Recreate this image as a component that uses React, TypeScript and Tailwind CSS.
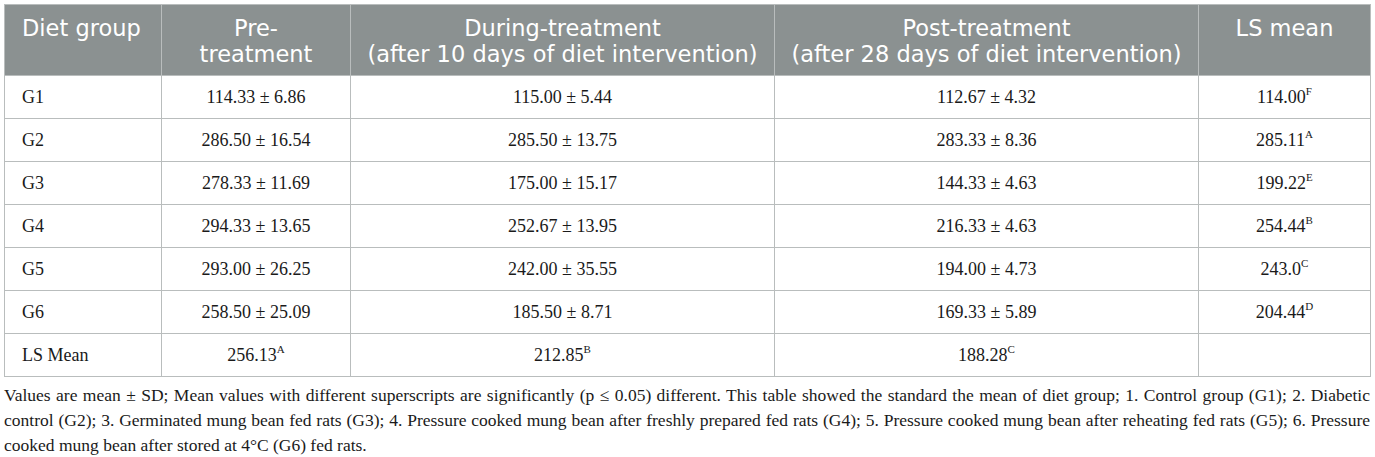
import React from "react";

type Row = { g: string; pre: React.ReactNode; dur: React.ReactNode; post: React.ReactNode; ls: React.ReactNode };

const Sup = ({ c }: { c: string }) => (
  <sup className="text-[11px] relative -top-[1px] align-super leading-none">{c}</sup>
);

const rows: Row[] = [
  { g: "G1", pre: "114.33 ± 6.86", dur: "115.00 ± 5.44", post: "112.67 ± 4.32", ls: <>114.00<Sup c="F" /></> },
  { g: "G2", pre: "286.50 ± 16.54", dur: "285.50 ± 13.75", post: "283.33 ± 8.36", ls: <>285.11<Sup c="A" /></> },
  { g: "G3", pre: "278.33 ± 11.69", dur: "175.00 ± 15.17", post: "144.33 ± 4.63", ls: <>199.22<Sup c="E" /></> },
  { g: "G4", pre: "294.33 ± 13.65", dur: "252.67 ± 13.95", post: "216.33 ± 4.63", ls: <>254.44<Sup c="B" /></> },
  { g: "G5", pre: "293.00 ± 26.25", dur: "242.00 ± 35.55", post: "194.00 ± 4.73", ls: <>243.0<Sup c="C" /></> },
  { g: "G6", pre: "258.50 ± 25.09", dur: "185.50 ± 8.71", post: "169.33 ± 5.89", ls: <>204.44<Sup c="D" /></> },
  { g: "LS Mean", pre: <>256.13<Sup c="A" /></>, dur: <>212.85<Sup c="B" /></>, post: <>188.28<Sup c="C" /></>, ls: "" },
];

export default function App() {
  const th =
    "border border-[#b9bdbd] bg-[#8b9191] text-white font-normal align-top pt-[11px] pb-0 text-[22.5px] leading-[25.5px] whitespace-nowrap";
  const td = "border border-[#b9bdbd] h-[43px] px-[17px] py-0 align-middle text-[18px] text-[#1a1a1a]";
  const line = "whitespace-nowrap text-justify [text-align-last:justify]";
  return (
    <div className="bg-white w-[1375px] h-[457px] pt-[4px] px-[4px]">
      <table className="border-collapse table-fixed w-[1366px]" style={{ fontFamily: "'Liberation Serif', serif" }}>
        <colgroup>
          <col className="w-[157px]" />
          <col className="w-[189px]" />
          <col className="w-[424px]" />
          <col className="w-[424px]" />
          <col className="w-[172px]" />
        </colgroup>
        <thead style={{ fontFamily: "'DejaVu Sans', sans-serif" }}>
          <tr className="h-[71px]">
            <th className={`${th} text-left px-[17px]`}>Diet group</th>
            <th className={`${th} text-center px-[4px]`}>
              Pre-
              <br />
              treatment
            </th>
            <th className={`${th} text-center px-[4px]`}>
              During-treatment
              <br />
              (after 10 days of diet intervention)
            </th>
            <th className={`${th} text-center px-[4px]`}>
              Post-treatment
              <br />
              (after 28 days of diet intervention)
            </th>
            <th className={`${th} text-center px-[4px]`}>LS mean</th>
          </tr>
        </thead>
        <tbody>
          {rows.map((r) => (
            <tr key={r.g}>
              <td className={`${td} text-left`}>{r.g}</td>
              <td className={`${td} text-center`}>{r.pre}</td>
              <td className={`${td} text-center`}>{r.dur}</td>
              <td className={`${td} text-center`}>{r.post}</td>
              <td className={`${td} text-center`}>{r.ls}</td>
            </tr>
          ))}
        </tbody>
      </table>
      <div
        className="mt-[6px] text-[17.5px] leading-[25px] text-[#1a1a1a] w-[1366px]"
        style={{ fontFamily: "'Liberation Serif', serif" }}
      >
        <div className={line}>
          Values are mean ± SD; Mean values with different superscripts are significantly (p ≤ 0.05) different. This
          table showed the standard the mean of diet group; 1. Control group (G1); 2. Diabetic
        </div>
        <div className={line}>
          control (G2); 3. Germinated mung bean fed rats (G3); 4. Pressure cooked mung bean after freshly prepared fed
          rats (G4); 5. Pressure cooked mung bean after reheating fed rats (G5); 6. Pressure
        </div>
        <div className="whitespace-nowrap">cooked mung bean after stored at 4°C (G6) fed rats.</div>
      </div>
    </div>
  );
}
